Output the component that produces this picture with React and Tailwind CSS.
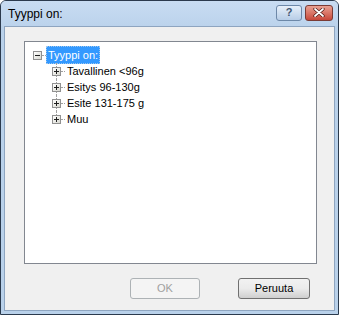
import React from "react";

function Expander({ open }) {
  return (
    <span className="relative w-[9px] h-[9px] border border-[#919191] bg-gradient-to-br from-white to-[#d8d8d0] flex items-center justify-center shrink-0">
      <span className="absolute w-[5px] h-px bg-[#1f1f1f]" />
      {!open && <span className="absolute h-[5px] w-px bg-[#1f1f1f]" />}
    </span>
  );
}

const items = ["Tavallinen <96g", "Esitys 96-130g", "Esite 131-175 g", "Muu"];

export default function App() {
  return (
    <div className="w-[339px] h-[315px] bg-[#b9d1ea] border border-[#2b3a4d] rounded-t-[6px] flex flex-col font-['Liberation_Sans',sans-serif] overflow-hidden">
      <div className="h-[25px] shrink-0 flex items-center pl-[7px] pr-[5px] bg-gradient-to-b from-[#c8dcf2] to-[#bcd3ec]">
        <span className="text-[12px] text-black flex-1">Tyyppi on:</span>
        <div className="flex gap-[3px] mt-[-2px]">
          <div className="w-[26px] h-[16px] rounded-[3px] border border-[#6d88a8] bg-gradient-to-b from-[#e7f0fa] to-[#b7cde6] flex items-center justify-center text-[11px] font-bold text-[#3f5570] leading-none">?</div>
          <div className="w-[28px] h-[16px] rounded-[3px] border border-[#7a3b35] bg-gradient-to-b from-[#e8a092] to-[#c7463a] flex items-center justify-center">
            <svg width="12" height="9" viewBox="0 0 12 9">
              <path d="M2 1 L10 8 M10 1 L2 8" stroke="#4a1410" strokeWidth="3.2" strokeLinecap="round" />
              <path d="M2 1 L10 8 M10 1 L2 8" stroke="#ffffff" strokeWidth="1.8" strokeLinecap="round" />
            </svg>
          </div>
        </div>
      </div>
      <div className="flex-1 mx-[3px] mb-[3px] border border-[#8ea5c0] bg-[#f0f0f0] flex flex-col">
        <div className="mt-[14px] ml-[19px] w-[293px] h-[223px] bg-white border border-[#828790] pt-[5px] pl-[8px] text-[11px] text-black leading-[16px]">
          <div className="flex items-center h-[16px]">
            <Expander open />
            <span className="w-[4px] border-t border-dotted border-[#a0a0a0]" />
            <span className="bg-[#3399ff] text-white px-px border border-dotted border-[#9ec7ee]">Tyyppi on:</span>
          </div>
          {items.map((t, i) => (
            <div key={i} className="flex h-[16px] pl-[19px]">
              <div className="w-[9px] flex flex-col shrink-0">
                <span className="w-[5px] h-[4px] border-r border-dotted border-[#a0a0a0]" />
                <Expander />
                {i < items.length - 1 && (
                  <span className="w-[5px] flex-1 border-r border-dotted border-[#a0a0a0]" />
                )}
              </div>
              <div className="flex items-center">
                <span className="w-[4px] border-t border-dotted border-[#a0a0a0]" />
                <span className="px-[2px]">{t}</span>
              </div>
            </div>
          ))}
        </div>
        <div className="flex justify-end gap-[38px] mt-[14px] pr-[24px]">
          <div className="w-[70px] h-[21px] rounded-[3px] border border-[#adb2b5] bg-[#f4f4f4] flex items-center justify-center text-[11px] text-[#a0a0a0]">OK</div>
          <div className="w-[72px] h-[21px] rounded-[3px] border border-[#707070] bg-gradient-to-b from-[#f2f2f2] via-[#ebebeb] to-[#cfcfcf] flex items-center justify-center text-[11px] text-black">Peruuta</div>
        </div>
      </div>
    </div>
  );
}
